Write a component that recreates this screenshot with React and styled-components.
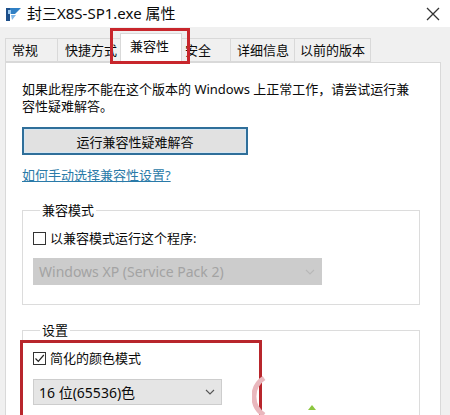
import React from "react";
import styled, { createGlobalStyle } from "styled-components";

const GlobalStyle = createGlobalStyle`
  html, body { margin: 0; padding: 0; background: #f0f0f0; }
  body { font-family: "Noto Sans CJK SC", "Noto Sans", sans-serif; color: #111; }
`;

const cjk = `"Segoe UI", "Noto Sans", "Noto Sans CJK SC", sans-serif`;

const Window = styled.div`
  position: relative;
  width: 450px;
  height: 415px;
  overflow: hidden;
  background: #f0f0f0;
  display: flex;
  flex-direction: column;
`;

const TitleBar = styled.div`
  height: 27px;
  flex: none;
  background: #ffffff;
  display: flex;
  align-items: center;
  padding-left: 5px;
  gap: 5px;
`;

const TitleText = styled.div`
  font-family: ${cjk};
  font-size: 15px;
  line-height: 17px;
  color: #0a0a0a;
  flex: 1;
`;

const CloseBtn = styled.div`
  width: 14px;
  height: 14px;
  margin-right: 10px;
  display: flex;
`;

const TabStrip = styled.div`
  position: relative;
  height: 35px;
  flex: none;
  display: flex;
  align-items: flex-end;
  padding-left: 5px;
`;

const Tab = styled.div`
  box-sizing: border-box;
  width: ${(p) => p.$w}px;
  height: ${(p) => (p.$active ? 30 : 24)}px;
  margin-bottom: ${(p) => (p.$active ? -1 : 0)}px;
  padding-left: ${(p) => p.$pl}px;
  border: 1px solid #d9d9d9;
  border-bottom: ${(p) => (p.$active ? "none" : "1px solid #d9d9d9")};
  background: ${(p) => (p.$active ? "#ffffff" : "#f0f0f0")};
  font-family: ${cjk};
  font-size: 13px;
  line-height: ${(p) => (p.$active ? 24 : 22)}px;
  color: #0a0a0a;
  white-space: nowrap;
  z-index: ${(p) => (p.$active ? 2 : 1)};
  & + & { margin-left: -1px; }
`;

const Highlight = styled.div`
  position: absolute;
  box-sizing: border-box;
  left: ${(p) => p.$x}px;
  top: ${(p) => p.$y}px;
  width: ${(p) => p.$w}px;
  height: ${(p) => p.$h}px;
  border: 3px solid #c8262c;
  z-index: 5;
  pointer-events: none;
`;

const Panel = styled.div`
  box-sizing: border-box;
  margin-left: 5px;
  width: 436px;
  flex: 1;
  background: #ffffff;
  border: 1px solid #d9d9d9;
  border-bottom: none;
  padding: 18px 0 0 16px;
  display: flex;
  flex-direction: column;
  align-items: flex-start;
`;

const Para = styled.p`
  margin: 0;
  font-family: ${cjk};
  font-size: 13px;
  line-height: 17px;
  color: #0a0a0a;
  white-space: nowrap;
`;

const Button = styled.div`
  box-sizing: border-box;
  margin-top: 12px;
  width: 226px;
  height: 28px;
  background: #e1e1e1;
  border: 2px solid #2f6f9a;
  box-shadow: inset 0 0 0 1px #d6e6f2;
  display: flex;
  align-items: center;
  justify-content: center;
  font-family: ${cjk};
  font-size: 13px;
  color: #0a0a0a;
`;

const Link = styled.a`
  margin-top: 12px;
  font-family: ${cjk};
  font-size: 13px;
  line-height: 17px;
  color: #2a7aa8;
  text-decoration: underline;
  text-underline-offset: 1px;
`;

const Group = styled.fieldset`
  box-sizing: border-box;
  margin: ${(p) => p.$mt}px 0 0 0;
  width: 398px;
  border: 1px solid #dcdcdc;
  padding: 0 0 ${(p) => p.$pb}px 10px;
  min-inline-size: 0;
  display: flex;
  flex-direction: column;
  align-items: flex-start;
`;

const Legend = styled.legend`
  margin-left: 7px;
  padding: 0 2px;
  font-family: ${cjk};
  font-size: 13px;
  line-height: 17px;
  color: #0a0a0a;
`;

const CheckRow = styled.label`
  margin-top: ${(p) => p.$mt}px;
  display: flex;
  align-items: center;
  gap: 4px;
  font-family: ${cjk};
  font-size: 13px;
  line-height: 17px;
  color: #0a0a0a;
`;

const Box = styled.span`
  box-sizing: border-box;
  width: 13px;
  height: 13px;
  border: 1px solid #333;
  background: #fff;
  display: flex;
  align-items: center;
  justify-content: center;
`;

const Select = styled.div`
  box-sizing: border-box;
  margin-top: ${(p) => p.$mt}px;
  width: ${(p) => p.$w}px;
  height: ${(p) => p.$h}px;
  background: ${(p) => (p.$disabled ? "#cccccc" : "#e5e5e5")};
  border: 1px solid ${(p) => (p.$disabled ? "#cccccc" : "#cdcdcd")};
  display: flex;
  align-items: center;
  justify-content: space-between;
  padding: 0 6px 0 5px;
  font-family: ${cjk};
  font-size: 14px;
  color: ${(p) => (p.$disabled ? "#a3a3a3" : "#0a0a0a")};
  white-space: nowrap;
`;

const RedFrame = styled.div`
  box-sizing: border-box;
  margin: 1px 0 0 -13px;
  width: 242px;
  height: 80px;
  border: 3px solid #b8262c;
  border-bottom: none;
  padding: 7px 0 0 10px;
  display: flex;
  flex-direction: column;
  align-items: flex-start;
`;

const Watermark = styled.svg`
  position: absolute;
  left: 252px;
  top: 370px;
  pointer-events: none;
  z-index: 6;
`;

const Chevron = ({ color }) => (
  <svg width="10" height="6" viewBox="0 0 10 6">
    <path d="M1 1 L5 5 L9 1" fill="none" stroke={color} strokeWidth="1.1" />
  </svg>
);

const AppIcon = () => (
  <svg width="17" height="16" viewBox="0 0 17 16">
    <rect x="1" y="2" width="4" height="13" fill="#1d4f8a" />
    <path d="M5 2 L16 2 L10 8 L5 8 Z" fill="#2f7fc4" />
    <path d="M6 9 L11 9 L7 14 Z" fill="#7fb6e6" />
    <rect x="3" y="4" width="3" height="4" fill="#9cc9ee" />
  </svg>
);

export default function App() {
  return (
    <>
      <GlobalStyle />
      <Window>
        <TitleBar>
          <AppIcon />
          <TitleText>封三X8S-SP1.exe 属性</TitleText>
          <CloseBtn>
            <svg width="14" height="14" viewBox="0 0 14 14">
              <path d="M1 1 L13 13 M13 1 L1 13" stroke="#333" strokeWidth="1.3" />
            </svg>
          </CloseBtn>
        </TitleBar>
        <TabStrip>
          <Tab $w={53} $pl={6}>常规</Tab>
          <Tab $w={64} $pl={7}>快捷方式</Tab>
          <Tab $w={62} $pl={9} $active>兼容性</Tab>
          <Tab $w={50} $pl={3}>安全</Tab>
          <Tab $w={65} $pl={6}>详细信息</Tab>
          <Tab $w={77} $pl={5}>以前的版本</Tab>
          <Highlight $x={110} $y={1} $w={80} $h={36} />
        </TabStrip>
        <Panel>
          <Para>
            如果此程序不能在这个版本的 Windows 上正常工作，请尝试运行兼
            <br />
            容性疑难解答。
          </Para>
          <Button>运行兼容性疑难解答</Button>
          <Link>如何手动选择兼容性设置?</Link>
          <Group $mt={18} $pb={19}>
            <Legend>兼容模式</Legend>
            <CheckRow $mt={11}>
              <Box />
              以兼容模式运行这个程序:
            </CheckRow>
            <Select $mt={11} $w={289} $h={27} $disabled>
              Windows XP (Service Pack 2)
              <Chevron color="#b8b8b8" />
            </Select>
          </Group>
          <Group $mt={17} $pb={0}>
            <Legend>设置</Legend>
            <RedFrame>
              <CheckRow $mt={0}>
                <Box>
                  <svg width="11" height="11" viewBox="0 0 11 11">
                    <path d="M1.5 5.5 L4.3 8.3 L9.8 2" fill="none" stroke="#222" strokeWidth="1.2" />
                  </svg>
                </Box>
                简化的颜色模式
              </CheckRow>
              <Select $mt={12} $w={189} $h={26}>
                16 位(65536)色
                <Chevron color="#555" />
              </Select>
            </RedFrame>
          </Group>
        </Panel>
        <Watermark width="90" height="45" viewBox="0 0 90 45">
          <path d="M12 8 A 22 22 0 0 0 12 45" fill="none" stroke="#e9b7bd" strokeWidth="5" />
          <path d="M60 35 L56 40 L64 40 Z" fill="#8cc63f" />
        </Watermark>
      </Window>
    </>
  );
}
